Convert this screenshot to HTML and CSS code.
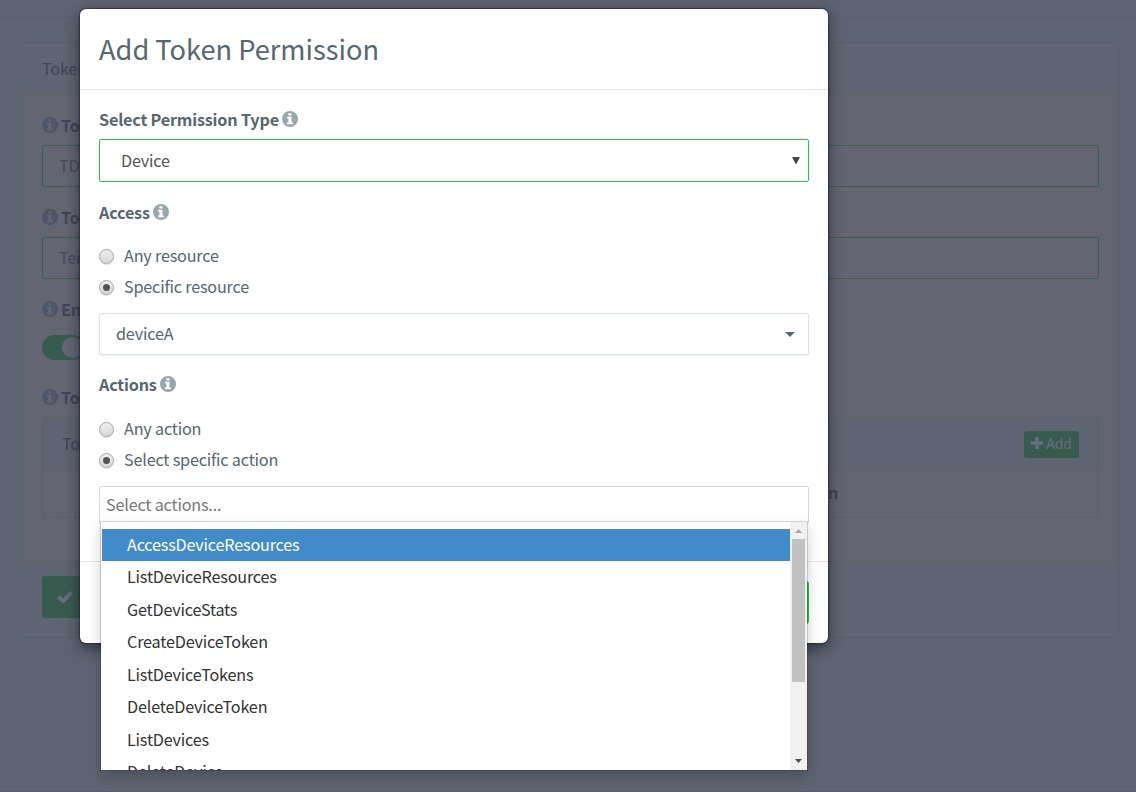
FILE: index.html
```html
<!DOCTYPE html>
<html lang="en">
<head>
<meta charset="utf-8">
<title>Add Token Permission</title>
<link rel="stylesheet" href="styles.css">
</head>
<body>
<svg class="defs" aria-hidden="true">
  <symbol id="info" viewBox="0 0 16 16"><path fill-rule="evenodd" d="M8 0a8 8 0 1 1 0 16A8 8 0 0 1 8 0zM6.3 2.2v2.3h3.2V2.2zM5 5.8v1.8h1.4v3.8H5v1.8h6v-1.8H9.5V5.8z"/></symbol>
</svg>
<main class="page">
  <div class="topbar"></div>
  <section class="panel">
    <header class="panel-head">Toke</header>
    <div class="panel-body">
      <div class="field"><div class="label"><svg class="info"><use href="#info"/></svg>To</div><div class="input">TD</div></div>
      <div class="field"><div class="label"><svg class="info"><use href="#info"/></svg>To</div><div class="input">Ter</div></div>
      <div class="field enabled"><div class="label"><svg class="info"><use href="#info"/></svg>En</div><div class="switch"><span class="knob"></span></div></div>
      <div class="field"><div class="label"><svg class="info"><use href="#info"/></svg>To</div>
        <div class="subpanel">
          <div class="sub-head"><span>To</span><span class="add"><svg class="plus" viewBox="0 0 12 12"><path d="M4.2 0h3.6v4.2H12v3.6H7.8V12H4.2V7.8H0V4.2h4.2z"/></svg>Add</span></div>
          <div class="sub-row">n</div>
        </div>
      </div>
    </div>
    <footer class="panel-foot"><div class="save"><svg class="check" viewBox="0 0 16 12"><path d="M1.5 6l4.7 4L14.5 1.5"/></svg></div></footer>
  </section>
</main>
<div class="modal">
  <header class="modal-head">Add Token Permission</header>
  <div class="modal-body">
    <div class="label"><span>Select Permission Type</span><svg class="info"><use href="#info"/></svg></div>
    <div class="select native"><span>Device</span><svg class="arrow" viewBox="0 0 8 8"><path d="M0 0h8L4 7.5z"/></svg></div>
    <div class="label second"><span>Access</span><svg class="info"><use href="#info"/></svg></div>
    <div class="radios">
      <div class="option"><i class="radio"></i><span>Any resource</span></div>
      <div class="option"><i class="radio on"></i><span>Specific resource</span></div>
    </div>
    <div class="select device"><span>deviceA</span><svg class="caret" viewBox="0 0 10 5"><path d="M0 0h10L5 5z"/></svg></div>
    <div class="label third"><span>Actions</span><svg class="info"><use href="#info"/></svg></div>
    <div class="radios actions">
      <div class="option"><i class="radio"></i><span>Any action</span></div>
      <div class="option"><i class="radio on"></i><span>Select specific action</span></div>
    </div>
    <div class="multi">Select actions...
      <div class="dropdown">
        <ul class="choices">
          <li class="active">AccessDeviceResources</li>
          <li>ListDeviceResources</li>
          <li>GetDeviceStats</li>
          <li>CreateDeviceToken</li>
          <li>ListDeviceTokens</li>
          <li>DeleteDeviceToken</li>
          <li>ListDevices</li>
          <li>DeleteDevice</li>
        </ul>
        <div class="scrollbar">
          <svg class="up" viewBox="0 0 7 4"><path d="M0 4h7L3.5 0z"/></svg>
          <div class="thumb"></div>
          <svg class="down" viewBox="0 0 7 4"><path d="M0 0h7L3.5 4z"/></svg>
        </div>
      </div>
    </div>
  </div>
  <footer class="modal-foot"><div class="ok"></div></footer>
</div>
</body>
</html>
```
FILE: styles.css
```css
* { box-sizing: border-box; }
body { margin: 0; width: 1136px; height: 792px; overflow: hidden; position: relative; background: #5d6471; font: 16.2px/24px "Noto Sans CJK SC", "Open Sans", sans-serif; letter-spacing: -0.19px; color: #58666e; }
.defs { position: absolute; width: 0; height: 0; }
.page { height: 792px; color: #3f4555; border-bottom: 1px solid #575c69; }
.topbar { height: 17px; border-bottom: 1px solid #595f6c; }
.panel { margin: 25px 17px 0 22px; height: 596px; border: 1px solid #5b5f6c; border-radius: 3px; background: #636573; display: flex; flex-direction: column; }
.panel-head { height: 52px; padding: 13px 19px; background: #5e6471; border-bottom: 1px solid #5c616e; }
.panel-body { flex: 1; padding: 18px 19px 0; }
.label { display: flex; align-items: center; gap: 3px; height: 24px; font-weight: 700; white-space: nowrap; }
.info { width: 16px; height: 16px; fill: #98a6ad; flex: none; }
.page .info { fill: #4d5465; }
.field { height: 92px; }
.input { margin-top: 8px; height: 42px; padding: 7px 16px; border: 1px solid #36614f; border-radius: 2px; color: #454a59; }
.enabled { height: 88px; }
.switch { width: 44px; height: 25px; margin-top: 14px; padding: 2px 2px 2px 20px; border-radius: 13px; background: #385b4f; }
.knob { display: block; width: 22px; height: 21px; border-radius: 50%; background: #646674; }
.subpanel { height: 101px; margin-top: 8px; border: 1px solid #5b606d; border-radius: 3px; }
.sub-head { height: 53px; display: flex; align-items: center; justify-content: space-between; padding: 0 19px; background: #5e6471; border-bottom: 1px solid #5b606d; }
.sub-head > span:first-child { margin-top: -3px; }
.add { width: 55px; height: 27px; padding-bottom: 2px; display: flex; align-items: center; justify-content: center; gap: 3px; background: #385b4f; border-radius: 3px; color: #686c7b; font-size: 14px; }
.plus { width: 12px; height: 12px; fill: #686c7b; }
.sub-row { padding: 9px 0 0 785px; font-weight: 700; }
.panel-foot { height: 76px; padding: 14px 19px; background: #5e6471; border-top: 1px solid #5a5f6c; }
.save { width: 100px; height: 42px; border-radius: 3px; background: #385b4f; padding: 15px; }
.check { display: block; width: 16px; height: 12px; fill: none; stroke: #686c7b; stroke-width: 4; }
.modal { position: absolute; left: 80px; top: 9px; width: 748px; height: 634px; display: flex; flex-direction: column; background: #fff; border-radius: 6px; box-shadow: 0 0 1px 1px rgba(30,32,46,.6), 0 5px 15px rgba(20,22,35,.65); }
.modal-head { height: 81px; padding: 19px 19px; border-bottom: 1px solid #e2e4e6; font-size: 27.2px; line-height: 40px; letter-spacing: 0; }
.modal-body { flex: 1; padding: 18px 19px 0; }
.modal .label > span { margin-top: -3px; }
.modal .label .info { margin-top: -2px; }
.select { display: flex; align-items: center; justify-content: space-between; background: #fff; border-radius: 2px; }
.select > span { padding-bottom: 2px; }
.option > span { padding-bottom: 4px; }
.native { height: 43px; margin-top: 7px; padding: 0 8px 0 21px; border: 1px solid #27c24c; color: #555; }
.arrow { width: 8px; height: 8px; fill: #444; }
.second { margin-top: 19px; }
.radios { margin-top: 16px; }
.actions { margin-top: 17px; }
.option { display: flex; align-items: center; height: 31px; gap: 10px; }
.radio { width: 15px; height: 15px; border: 1px solid #a6a6a6; border-radius: 50%; background: linear-gradient(#eee, #d8d8d8); box-shadow: 0 1px 1px rgba(0,0,0,.12); display: flex; align-items: center; justify-content: center; }
.on::after { content: ""; width: 7px; height: 7px; border-radius: 50%; background: #555; }
.device { height: 42px; margin-top: 10px; padding: 0 13px 0 16px; border: 1px solid #dae3e5; box-shadow: 0 1px 2px rgba(90,100,110,.12); }
.caret { width: 10px; height: 5px; fill: #58666e; }
.third { margin-top: 18px; }
.multi { position: relative; height: 38px; margin-top: 10px; padding: 5px 6px; border: 1px solid #cfdadd; border-radius: 2px; color: #777; }
.dropdown { position: absolute; left: 0; top: 34px; width: 708px; height: 250px; display: flex; overflow: hidden; border: 1px solid rgba(0,0,0,.15); border-bottom-color: rgba(0,0,0,.15); background: #fff; background-clip: padding-box; box-shadow: 0 6px 12px rgba(0,0,0,.175); color: #333; }
.choices { flex: 1; margin: 0; padding: 7px 0 0 1px; list-style: none; }
.choices li { height: 32.5px; padding: 3px 0 0 25px; }
.choices .active { height: 32px; background: #428bca; color: #fff; }
.scrollbar { width: 17px; padding: 7px 0 7px; background: #f1f1f1; display: flex; flex-direction: column; align-items: center; }
.up { width: 7px; height: 4px; flex: none; fill: #a3a3a3; }
.down { width: 7px; height: 4px; margin-top: auto; flex: none; fill: #505050; }
.thumb { width: 13px; height: 143px; margin-top: 6px; background: #c1c1c1; }
.modal-foot { height: 82px; padding: 19px; border-top: 1px solid #e2e4e6; display: flex; justify-content: flex-end; }
.ok { width: 76px; height: 43px; background: #27c24c; border-radius: 3px; }
```
